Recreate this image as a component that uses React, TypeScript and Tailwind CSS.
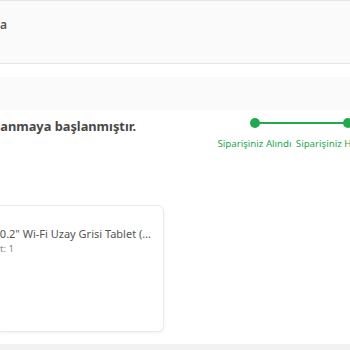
import React from 'react';

const steps = ['Siparişiniz Alındı', 'Siparişiniz Hazırlanıyor', 'Kargoya Verildi', 'Teslim Edildi'];

function Stepper() {
  return (
    <div className="flex">
      {steps.map((label, i) => (
        <div key={label} className="relative flex w-[93px] shrink-0 flex-col items-center">
          {i < steps.length - 1 && (
            <div className="absolute left-[50%] top-[6px] h-[2px] w-[93px] bg-[#21a94e]" />
          )}
          <div className="relative z-10 mt-[2px] h-[10px] w-[10px] rounded-full bg-[#21a94e]" />
          <span className="mt-[10px] whitespace-nowrap text-[9.7px] leading-[12px] text-[#21a94e]">
            {label}
          </span>
        </div>
      ))}
    </div>
  );
}

export default function App() {
  return (
    <div
      className="h-[350px] w-[350px] overflow-hidden bg-white"
      style={{ fontFamily: '"Noto Sans", "Open Sans", sans-serif' }}
    >
      <div className="h-[64px] border-y border-[#e6e6e6] bg-[#fafafa] pt-[15px]">
        <div className="flex w-[7px] justify-end whitespace-nowrap text-[12px] font-semibold text-[#555]">
          Sipariş Bilgileri ve Detayına
        </div>
      </div>

      <div className="mt-[13px] h-[33px] bg-[#fafafa]" />

      <div className="flex items-start pt-[6px]">
        <div className="mt-[2px] flex w-[136px] shrink-0 justify-end whitespace-nowrap text-[12.8px] font-bold leading-[17px] text-[#484848]">
          Siparişiniz hazırlanmaya başlanmıştır.
        </div>
        <div className="ml-[72px]">
          <Stepper />
        </div>
      </div>

      <div className="mt-[55px] flex h-[127px] w-[164px] flex-col rounded-br-[6px] rounded-tr-[6px] border border-l-0 border-[#ebebeb] shadow-[0_1px_3px_rgba(0,0,0,0.06)]">
        <div className="mt-[19px] flex w-[151px] justify-end whitespace-nowrap text-[11px] leading-[17px] text-[#555]">
          Apple iPad 10.2" Wi-Fi Uzay Grisi Tablet (…
        </div>
        <div className="mt-[1px] flex w-[14px] justify-end whitespace-nowrap text-[9.5px] leading-[12px] text-[#888]">
          Adet: 1
        </div>
      </div>

      <div className="mt-[12px] h-[10px] bg-[#f2f2f2]" />
    </div>
  );
}
